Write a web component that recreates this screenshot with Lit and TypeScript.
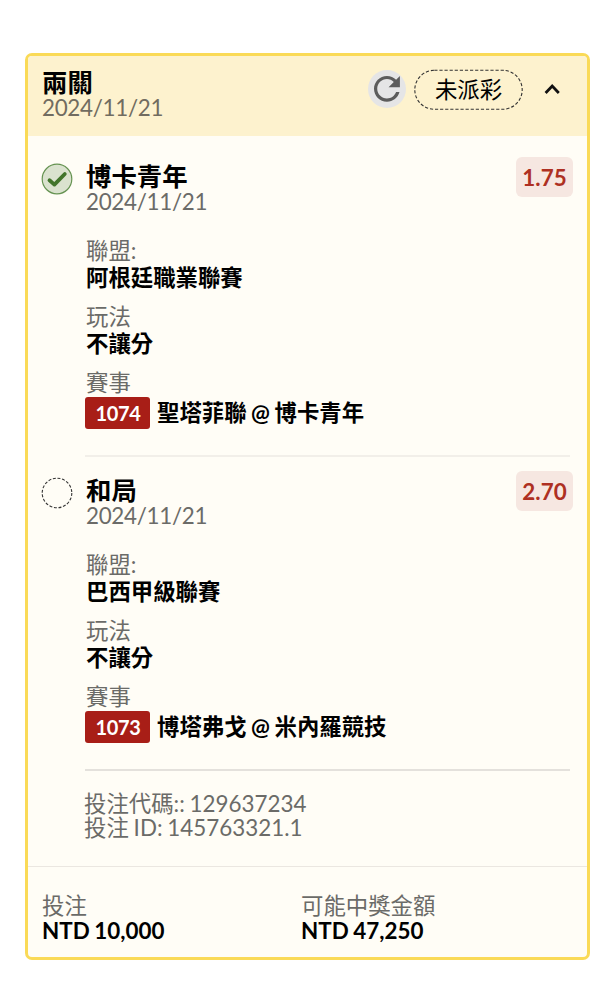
import { LitElement, html, css } from "lit";
import { customElement, property } from "lit/decorators.js";

interface Leg {
  pick: string;
  date: string;
  odds: string;
  won: boolean;
  league: string;
  market: string;
  code: string;
  match: string;
}

const legs: Leg[] = [
  { pick: "博卡青年", date: "2024/11/21", odds: "1.75", won: true, league: "阿根廷職業聯賽", market: "不讓分", code: "1074", match: "聖塔菲聯 @ 博卡青年" },
  { pick: "和局", date: "2024/11/21", odds: "2.70", won: false, league: "巴西甲級聯賽", market: "不讓分", code: "1073", match: "博塔弗戈 @ 米內羅競技" },
];

@customElement("bet-leg")
export class BetLeg extends LitElement {
  @property({ attribute: false }) leg!: Leg;

  static styles = css`
    :host { display: grid; grid-template-columns: 44px 1fr; }
    .status { display: block; width: 32px; height: 32px; margin: 1px 0 0 -1px; }
    .head { display: flex; justify-content: space-between; align-items: flex-start; height: 75px; padding-right: 1px; }
    .pick { font-size: 25.4px; line-height: 28px; font-weight: 700; color: #000; }
    .date { letter-spacing: -0.3px; line-height: 23px; color: #6b6b68; }
    .odds { box-sizing: border-box; width: 57px; height: 40px; margin: -5px -4px 0 0; border-radius: 6px; background: #f6e7e1; color: #ae3022; font-weight: 700; line-height: 41px; text-align: center; }
    .pair { margin-bottom: 12px; line-height: 27px; }
    .label { color: #6b6b68; }
    .value { font-weight: 700; color: #000; }
    .match { display: flex; align-items: center; gap: 7px; height: 33px; font-weight: 700; color: #000; }
    .code { width: 65px; height: 32px; margin-left: -1px; border-radius: 3px; background: #a81e17; color: #fff; font-size: 20px; letter-spacing: -0.3px; line-height: 32px; text-indent: 1px; text-align: center; }
    .last { margin: 0; line-height: 27px; }
  `;

  render() {
    const l = this.leg;
    return html`
      ${l.won
        ? html`<svg class="status" viewBox="0 0 32 32" fill="none"><circle cx="16" cy="16" r="14.8" fill="#dae2ce" stroke="#669352" stroke-width="1.2"/><path d="M8.5 17.3l4.9 4.3L23.8 11" stroke="#42752b" stroke-width="3.8" stroke-linecap="round" stroke-linejoin="round"/></svg>`
        : html`<svg class="status" viewBox="0 0 32 32" fill="none"><circle cx="16" cy="16" r="14.8" stroke="#333" stroke-width="1.1" stroke-dasharray="3 1.65"/></svg>`}
      <div>
        <div class="head">
          <div><div class="pick">${l.pick}</div><div class="date">${l.date}</div></div>
          <div class="odds">${l.odds}</div>
        </div>
        <div class="pair"><div class="label">聯盟:</div><div class="value">${l.league}</div></div>
        <div class="pair"><div class="label">玩法</div><div class="value">${l.market}</div></div>
        <div class="last"><div class="label">賽事</div><div class="match"><span class="code">${l.code}</span><span>${l.match}</span></div></div>
      </div>
    `;
  }
}

@customElement("app-root")
export class AppRoot extends LitElement {
  static styles = css`
    :host { display: block; box-sizing: border-box; height: 1000px; padding: 53px 19px 0 25px; background: #fff; font: 22.4px/27px Lato, "Noto Sans CJK TC", sans-serif; word-spacing: -0.9px; white-space: nowrap; }
    .card { box-sizing: border-box; height: 907px; border: 3px solid #fada57; border-radius: 7px; background: #fffdf6; overflow: hidden; }
    .top { box-sizing: border-box; display: flex; height: 80px; padding: 13px 18px 0 14px; background: #fdf2ce; }
    .names { flex: 1; }
    .title { font-size: 25.4px; line-height: 27px; font-weight: 700; color: #000; }
    .date { letter-spacing: -0.3px; line-height: 24px; color: #716c60; }
    .refresh { width: 38px; height: 38px; margin: 1px 8px 0 0; }
    .state { box-sizing: border-box; width: 109px; height: 41px; margin-right: 12px; display: grid; place-items: center; position: relative; color: #000; }
    .ring { position: absolute; inset: 0; }
    .chev { width: 34px; height: 40px; }
    .legs { padding: 26px 17px 0 14px; }
    .rule { height: 2px; margin: 26px 0 19px 43px; background: #f2efe9; }
    .rule.end { margin-bottom: 21px; background: #e4e1dc; }
    .ids { margin-left: 42px; line-height: 24px; height: 74px; color: #6b6b68; }
    .sums { display: grid; grid-template-columns: 259px 1fr; padding: 26px 14px 0; border-top: 1px solid #ebe7e1; line-height: 25px; color: #6b6b68; }
    .money { font-weight: 700; color: #000; }
  `;

  render() {
    return html`
      <div class="card">
        <div class="top">
          <div class="names"><div class="title">兩關</div><div class="date">2024/11/21</div></div>
          <svg class="refresh" viewBox="0 0 38 38">
            <circle cx="19" cy="19" r="19" fill="#e5e5e6"/>
            <path transform="translate(-.5 -.6) scale(1.62)" d="M17.65 6.35C16.2 4.9 14.21 4 12 4c-4.42 0-7.99 3.58-7.99 8s3.57 8 7.99 8c3.73 0 6.84-2.55 7.73-6h-2.08c-.82 2.33-3.04 4-5.65 4-3.31 0-6-2.69-6-6s2.69-6 6-6c1.66 0 3.14.69 4.22 1.78L13 11h7V4l-2.35 2.35z" fill="#5c5c5c"/>
          </svg>
          <div class="state">
            <svg class="ring" width="109" height="41" fill="none"><rect x=".8" y="1.3" width="107.4" height="39" rx="19.5" stroke="#333" stroke-width="1.1" stroke-dasharray="3.2 1.9"/></svg>
            <span>未派彩</span>
          </div>
          <svg class="chev" viewBox="0 0 34 40" fill="none"><path d="M10.6 24l6.6-6.9 6.6 6.9" stroke="#111" stroke-width="2.8"/></svg>
        </div>
        <div class="legs">
          <bet-leg .leg=${legs[0]}></bet-leg>
          <div class="rule"></div>
          <bet-leg .leg=${legs[1]}></bet-leg>
          <div class="rule end"></div>
          <div class="ids"><div>投注代碼:: 129637234</div><div>投注 ID: 145763321.1</div></div>
        </div>
        <div class="sums">
          <div><div>投注</div><div class="money">NTD 10,000</div></div>
          <div><div>可能中獎金額</div><div class="money">NTD 47,250</div></div>
        </div>
      </div>
    `;
  }
}
